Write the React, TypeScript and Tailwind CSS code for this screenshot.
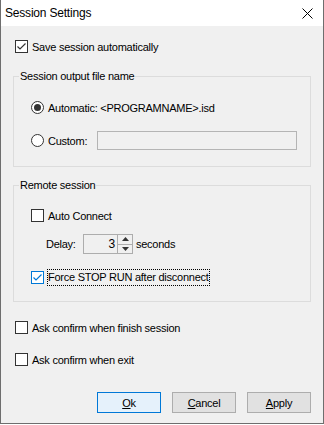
import React from "react";

const font = { fontFamily: '"Liberation Sans", Arial, sans-serif' };

function CheckBox({ checked, focus }: { checked?: boolean; focus?: boolean }) {
  return (
    <div
      className={
        "w-[13px] h-[13px] shrink-0 border bg-white flex items-center justify-center " +
        (focus ? "border-[#0078d7]" : "border-[#333333]")
      }
    >
      {checked && (
        <svg width="11" height="11" viewBox="0 0 11 11">
          <path d="M1.5 5.5 L4 8 L9.5 2.5" fill="none" stroke={focus ? "#0078d7" : "#333333"} strokeWidth="1.2" />
        </svg>
      )}
    </div>
  );
}

function Radio({ checked }: { checked?: boolean }) {
  return (
    <div className="w-[13px] h-[13px] shrink-0 rounded-full border border-[#333333] bg-white flex items-center justify-center">
      {checked && <div className="w-[7px] h-[7px] rounded-full bg-[#333333]" />}
    </div>
  );
}

function Btn({ children, def }: { children: React.ReactNode; def?: boolean }) {
  return (
    <div
      className={
        "w-[64px] h-[21px] flex items-center justify-center border " +
        (def ? "bg-[#e5f1fb] border-[#0078d7]" : "bg-[#e1e1e1] border-[#adadad]")
      }
    >
      {children}
    </div>
  );
}

export default function App() {
  return (
    <div style={font} className="w-[324px] h-[424px] border-x border-b border-[#6e6e6e] bg-[#f0f0f0] text-black text-[11px] tracking-[-0.25px] leading-[14px] flex flex-col">
      {/* Title bar */}
      <div className="h-[26px] bg-white flex items-center justify-between pl-[4px] pr-[10px] shrink-0">
        <span className="text-[12px] tracking-[-0.2px]">Session Settings</span>
        <svg width="11" height="11" viewBox="0 0 11 11">
          <path d="M0.5 0.5 L10.5 10.5 M10.5 0.5 L0.5 10.5" stroke="#000" strokeWidth="1" />
        </svg>
      </div>

      <div className="flex flex-col pl-[14px] pr-[12px]">
        <div className="mt-[14px] h-[13px] flex items-center gap-[4px]">
          <CheckBox checked />
          <span>Save session automatically</span>
        </div>

        {/* Group 1 */}
        <div className="relative mt-[23px] h-[91px] w-[298px] -ml-[2px] border border-[#dcdcdc] flex flex-col pl-[17px]">
          <span className="absolute -top-[8px] left-[5px] px-[1px] bg-[#f0f0f0]">Session output file name</span>
          <div className="mt-[24px] h-[13px] flex items-center gap-[4px]">
            <Radio checked />
            <span>Automatic: &lt;PROGRAMNAME&gt;.isd</span>
          </div>
          <div className="mt-[20px] h-[13px] flex items-center">
            <Radio />
            <span className="ml-[4px] w-[49px]">Custom:</span>
            <div className="h-[19px] w-[200px] border border-[#b4b4b4] bg-[#f0f0f0]" />
          </div>
        </div>

        {/* Group 2 */}
        <div className="relative mt-[18px] h-[117px] w-[298px] -ml-[2px] border border-[#dcdcdc] flex flex-col pl-[17px]">
          <span className="absolute -top-[8px] left-[5px] px-[1px] bg-[#f0f0f0]">Remote session</span>
          <div className="mt-[23px] h-[13px] flex items-center gap-[4px]">
            <CheckBox />
            <span>Auto Connect</span>
          </div>
          <div className="mt-[12px] h-[20px] flex items-center pl-[15px]">
            <span className="w-[37px]">Delay:</span>
            <div className="h-[20px] w-[50px] border border-[#adadad] bg-[#f0f0f0] flex">
              <div className="flex-1 flex items-center justify-end pr-[2px] text-[12px]">3</div>
              <div className="w-[15px] flex flex-col bg-[#f0f0f0] border-l border-[#adadad]">
                <div className="flex-1 flex items-center justify-center border-b border-[#adadad]">
                  <svg width="7" height="4" viewBox="0 0 7 4"><path d="M0 4 L3.5 0 L7 4 Z" fill="#333" /></svg>
                </div>
                <div className="flex-1 flex items-center justify-center">
                  <svg width="7" height="4" viewBox="0 0 7 4"><path d="M0 0 L3.5 4 L7 0 Z" fill="#333" /></svg>
                </div>
              </div>
            </div>
            <span className="ml-[3px]">seconds</span>
          </div>
          <div className="mt-[17px] h-[13px] flex items-center gap-[3px]">
            <CheckBox checked focus />
            <span className="border border-dotted border-black leading-[15px]">Force STOP RUN after disconnect</span>
          </div>
        </div>

        <div className="mt-[19px] h-[13px] flex items-center gap-[4px]">
          <CheckBox />
          <span>Ask confirm when finish session</span>
        </div>
        <div className="mt-[19px] h-[13px] flex items-center gap-[4px]">
          <CheckBox />
          <span>Ask confirm when exit</span>
        </div>

        <div className="mt-[26px] flex justify-end gap-[11px]">
          <Btn def><span><u>O</u>k</span></Btn>
          <Btn><span><u>C</u>ancel</span></Btn>
          <Btn><span><u>A</u>pply</span></Btn>
        </div>
      </div>
    </div>
  );
}
